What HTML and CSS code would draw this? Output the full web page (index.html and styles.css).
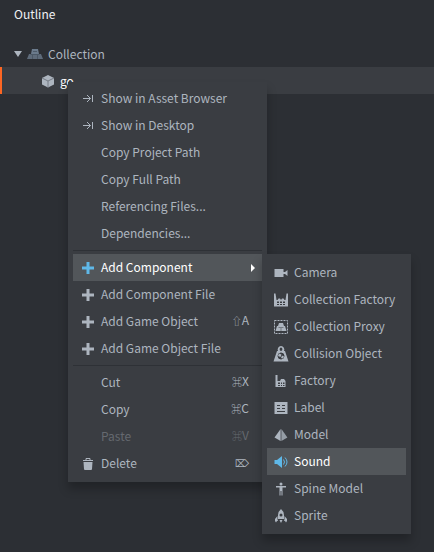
FILE: index.html
```html
<!DOCTYPE html>
<html lang="en">
<head>
<meta charset="utf-8">
<title>Outline</title>
<link rel="stylesheet" href="styles.css">
</head>
<body>
<main class="panel">
  <h1 class="panel-title">Outline</h1>
  <ul class="tree">
    <li class="tree-row">
      <svg class="disclosure" viewBox="0 0 8 6"><path d="M0 0h8L4 6z"/></svg>
      <svg class="icon collection" viewBox="0 0 16 16"><path d="M5 3h6l1 5H4z"/><path d="M2 8h12l2 5H0z" opacity=".8"/><path d="M6 5.500h4M3.500 8.500h9M5.500 9v4M10.500 9v4" fill="none" stroke="#465361" stroke-width=".8"/></svg>
      <span>Collection</span>
    </li>
    <li class="tree-row child selected">
      <svg class="icon" viewBox="0 0 16 16"><path d="M8 2l6 3v6.500l-6 3-6-3V5z"/><path d="M2 5l6 3 6-3M8 8v6.500" fill="none" stroke="#747b84"/></svg>
      <span>go</span>
    </li>
  </ul>
</main>

<div class="menu context-menu" role="menu">
  <button class="item" role="menuitem"><svg class="icon" viewBox="0 0 16 16"><path class="line" d="M3 7.500h7.500M7 4l3.500 3.500L7 11M12.500 4v7"/></svg><span class="name">Show in Asset Browser</span></button>
  <button class="item" role="menuitem"><svg class="icon" viewBox="0 0 16 16"><path class="line" d="M3 7.500h7.500M7 4l3.500 3.500L7 11M12.500 4v7"/></svg><span class="name">Show in Desktop</span></button>
  <button class="item" role="menuitem"><span class="icon"></span><span class="name">Copy Project Path</span></button>
  <button class="item" role="menuitem"><span class="icon"></span><span class="name">Copy Full Path</span></button>
  <button class="item" role="menuitem"><span class="icon"></span><span class="name">Referencing Files...</span></button>
  <button class="item" role="menuitem"><span class="icon"></span><span class="name">Dependencies...</span></button>
  <hr class="separator">
  <button class="item active" role="menuitem" aria-haspopup="menu" aria-expanded="true"><svg class="icon" viewBox="0 0 16 16"><path d="M6.500 2h3v4.500H14v3H9.500V14h-3V9.500H2v-3h4.500z"/></svg><span class="name">Add Component</span><svg class="arrow" viewBox="0 0 4 8"><path d="M0 0l4 4-4 4z"/></svg></button>
  <button class="item" role="menuitem"><svg class="icon" viewBox="0 0 16 16"><path d="M6.500 2h3v4.500H14v3H9.500V14h-3V9.500H2v-3h4.500z"/></svg><span class="name">Add Component File</span></button>
  <button class="item" role="menuitem"><svg class="icon" viewBox="0 0 16 16"><path d="M6.500 2h3v4.500H14v3H9.500V14h-3V9.500H2v-3h4.500z"/></svg><span class="name">Add Game Object</span><kbd class="keys"><span class="symbol">⇧</span>A</kbd></button>
  <button class="item" role="menuitem"><svg class="icon" viewBox="0 0 16 16"><path d="M6.500 2h3v4.500H14v3H9.500V14h-3V9.500H2v-3h4.500z"/></svg><span class="name">Add Game Object File</span></button>
  <hr class="separator">
  <button class="item" role="menuitem"><span class="icon"></span><span class="name">Cut</span><kbd class="keys"><span class="symbol">⌘</span>X</kbd></button>
  <button class="item" role="menuitem"><span class="icon"></span><span class="name">Copy</span><kbd class="keys"><span class="symbol">⌘</span>C</kbd></button>
  <button class="item" role="menuitem" disabled><span class="icon"></span><span class="name">Paste</span><kbd class="keys"><span class="symbol">⌘</span>V</kbd></button>
  <button class="item" role="menuitem"><svg class="icon" viewBox="0 0 16 16"><path d="M3.500 6h9l-.5 7q0 1-1 1H5q-1 0-1-1z"/><path d="M3 4.500h10M6 4V2.500h4V4" fill="none" stroke="currentColor"/></svg><span class="name">Delete</span><kbd class="keys"><span class="symbol">⌦</span></kbd></button>
</div>

<div class="menu submenu" role="menu" aria-label="Add Component">
  <button class="item" role="menuitem"><svg class="icon" viewBox="0 0 16 16"><path d="M1.500 4h9v8h-9zM10.500 7l1.500 0 2.500-2v6L12 9h-1.500z"/></svg><span class="name">Camera</span></button>
  <button class="item" role="menuitem"><svg class="icon" viewBox="0 0 16 16"><path fill-rule="evenodd" d="M1 1.500h1.500L3.500 8h1l1-1.500H7L8 8l1-1.500h1.500l1 1.500h1l1-6.500H15V14.500H1zM4 9.500v1.500h2V9.500zM7 9.500v1.500h2V9.500zM10 9.500v1.500h2V9.500zM4 12v1h2V12zM7 12v1h2V12zM10 12v1h2V12z"/></svg><span class="name">Collection Factory</span></button>
  <button class="item" role="menuitem"><svg class="icon" viewBox="0 0 16 16"><path class="line dashed" d="M1.500 1.500h13v13h-13z"/><path d="M6 4h4l1 3h1l1.500 5h-11L4 7h1z"/><path d="M5.500 8.500h5M8 9v3" class="cut fine"/></svg><span class="name">Collection Proxy</span></button>
  <button class="item" role="menuitem"><svg class="icon" viewBox="0 0 16 16"><path fill-rule="evenodd" d="M8 0a3.500 3.500 0 0 1 3 5h1l3.500 10.500H.5L4 5h1a3.500 3.500 0 0 1 3-5zM8 1.500A1.800 1.800 0 0 0 8 5a1.800 1.800 0 0 0 0-3.500z"/><circle class="cut" cx="8" cy="10" r="3"/><path d="M6 7.500l2.500 1-1 2.500-2.500-1zM9 9.500l2 1-1 2-2-.5z"/></svg><span class="name">Collision Object</span></button>
  <button class="item" role="menuitem"><svg class="icon" viewBox="0 0 16 16"><path fill-rule="evenodd" d="M2.500 2h2v6H7l1-2h3l1.500 2v6h-10zM5 9.500V11h2V9.500zM8 9.500V11h1V9.500zM10 9.500V11h1.500V9.500zM5 12v1h2v-1zM8 12v1h1v-1zM10 12v1h1.500v-1z"/></svg><span class="name">Factory</span></button>
  <button class="item" role="menuitem"><svg class="icon" viewBox="0 0 16 16"><path d="M1.500 2h13v12h-13z"/><path d="M4 5.500h3M9 5.500h3M4 8.500h3M9 8.500h3M4 11.500h8" class="cut"/></svg><span class="name">Label</span></button>
  <button class="item" role="menuitem"><svg class="icon" viewBox="0 0 16 16"><path d="M7.600 2v12L1.500 10.500z"/><path d="M8.400 2v12l6-3.500z" opacity=".8"/></svg><span class="name">Model</span></button>
  <button class="item active" role="menuitem"><svg class="icon" viewBox="0 0 16 16"><path d="M1.500 6H4l5-4v12l-5-4H1.500z"/><path class="line" d="M10.500 5.500q2 2.500 0 5M12 3.500q4 4.500 0 9"/></svg><span class="name">Sound</span></button>
  <button class="item" role="menuitem"><svg class="icon" viewBox="0 0 16 16"><circle cx="8" cy="3" r="1.500"/><path d="M3 5h10v1.500H9.500v8h-1V10h-1v4.500h-1v-8H3z"/></svg><span class="name">Spine Model</span></button>
  <button class="item" role="menuitem"><svg class="icon" viewBox="0 0 16 16"><path fill-rule="evenodd" d="M8 1q3 2.500 3 6v4H5V7q0-3.500 3-6zM8 5.500a1.500 1.500 0 0 0 0 3 1.500 1.500 0 0 0 0-3zM4.500 8v3.500L5 13H4l-1 1.500-1-1.500v-2zM11.500 8v3.500L11 13h1l1 1.500 1-1.500v-2zM6.500 12h3L8 15z"/></svg><span class="name">Sprite</span></button>
</div>
</body>
</html>
```
FILE: styles.css
```css
* {
  box-sizing: border-box;
}

body {
  margin: 0;
  min-height: 100vh;
  background: #2c2f34;
  color: #adb5bf;
  font: 12px/24px "Noto Sans CJK SC", "DejaVu Sans", sans-serif;
}

.panel-title {
  margin: 0;
  padding: 2px 14px 14px;
  color: #f0f2f4;
  font-size: 12px;
  font-weight: 400;
}

.tree {
  margin: 0;
  padding: 0;
  list-style: none;
}

.tree-row {
  display: flex;
  align-items: center;
  gap: 5px;
  height: 27px;
  padding-left: 14px;
}

.tree-row.child {
  padding-left: 38px;
  border-left: 2px solid transparent;
}

.tree-row.selected {
  gap: 4px;
  border-color: #fd6623;
  background: #3a3d42;
  color: #fff;
}

.tree-row.selected .icon {
  color: #adb5bf;
}

.disclosure {
  width: 8px;
  height: 6px;
  fill: #adb5bf;
}

.icon {
  flex: none;
  width: 16px;
  height: 16px;
  fill: currentColor;
}

.icon.collection {
  color: #6b7b8c;
}

.line {
  fill: none;
  stroke: currentColor;
}

.dashed {
  stroke-dasharray: 2 1;
}

.cut {
  fill: #3a3d42;
  stroke: #3a3d42;
}

.fine {
  stroke-width: 0.5;
}

.menu {
  position: absolute;
  display: flex;
  flex-direction: column;
  padding: 5px;
  background: #3a3d42;
  box-shadow: 0 7px 9px rgba(0, 0, 0, 0.25);
}

.context-menu {
  top: 82px;
  left: 68px;
  width: 199px;
  padding-top: 3px;
}

.submenu {
  top: 254px;
  left: 262px;
  width: 149px;
}

.item {
  display: flex;
  align-items: center;
  gap: 5px;
  height: 27px;
  margin: 0;
  padding: 0 7px;
  border: 0;
  background: none;
  color: inherit;
  font: inherit;
  text-align: left;
}

.submenu .item {
  padding: 0 6px;
}

.name,
.keys {
  padding-bottom: 2px;
}

.name {
  flex: 1;
  white-space: nowrap;
}

.item.active {
  background: #52565a;
  color: #fff;
}

.item.active .icon {
  color: #5fb8e8;
}

.item:disabled {
  color: #65696f;
}

.keys {
  margin-right: 6px;
  font: inherit;
}

.symbol {
  font-size: 10px;
}

.arrow {
  width: 4px;
  height: 8px;
  fill: currentColor;
}

.separator {
  width: 100%;
  height: 1px;
  margin: 3px 0;
  border: 0;
  background: #2e3136;
}
```
